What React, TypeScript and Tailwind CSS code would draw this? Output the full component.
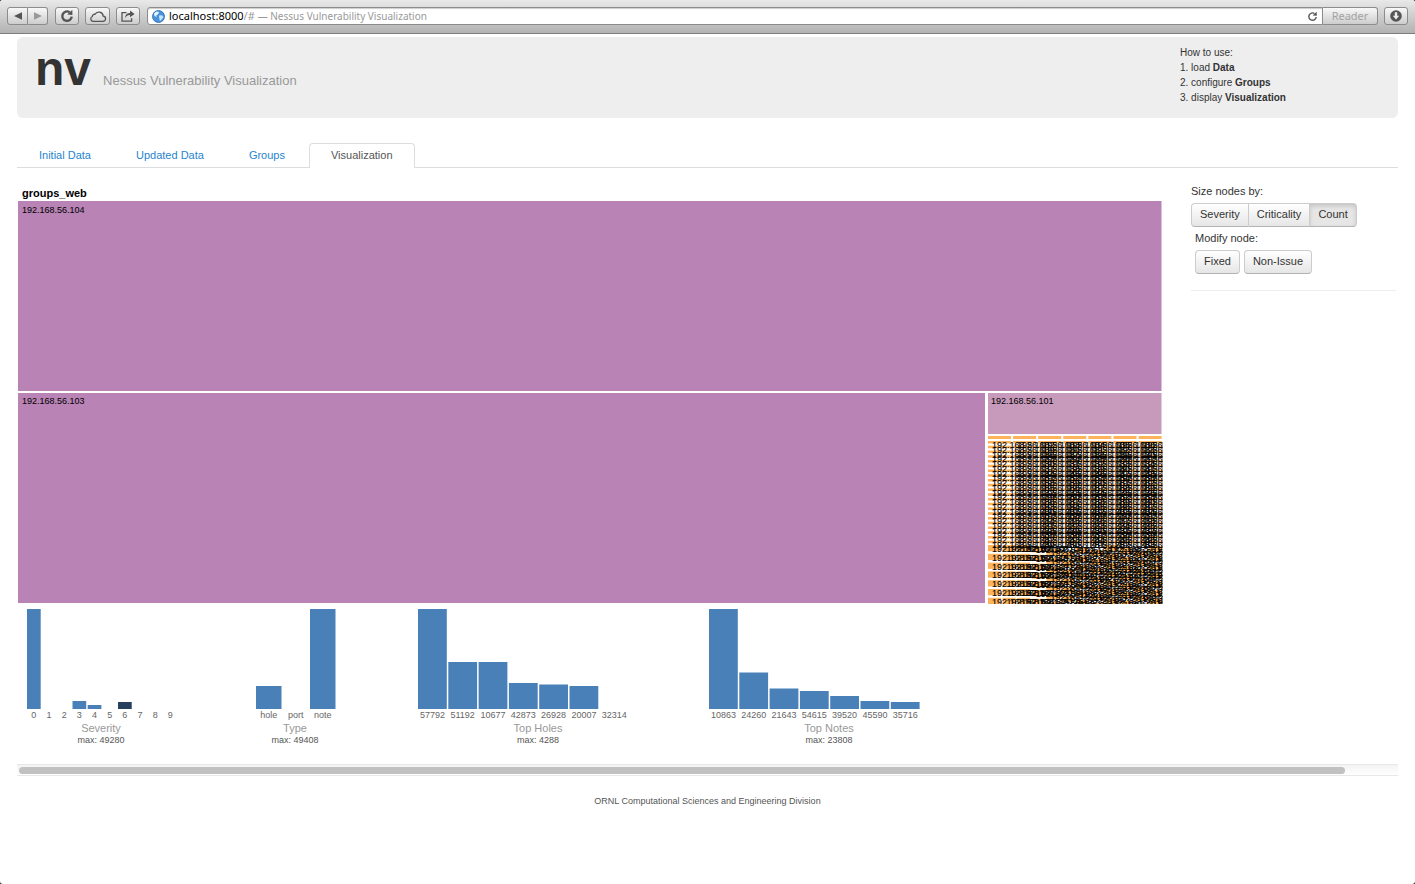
import React, { useState } from "react";

type Bar = { label: string; height: number; dark?: boolean };

type ChartProps = {
  title: string;
  max: string;
  bars: Bar[];
  width: number;
  pitch: number;
  barWidth: number;
  titleX: number;
};

const severity: Bar[] = [
  { label: "0", height: 100 },
  { label: "1", height: 0 },
  { label: "2", height: 0 },
  { label: "3", height: 8 },
  { label: "4", height: 4 },
  { label: "5", height: 0 },
  { label: "6", height: 7, dark: true },
  { label: "7", height: 0 },
  { label: "8", height: 0 },
  { label: "9", height: 0 },
];

const types: Bar[] = [
  { label: "hole", height: 23 },
  { label: "port", height: 0 },
  { label: "note", height: 100 },
];

const holes: Bar[] = [
  { label: "57792", height: 100 },
  { label: "51192", height: 47 },
  { label: "10677", height: 47 },
  { label: "42873", height: 26 },
  { label: "26928", height: 24.5 },
  { label: "20007", height: 23 },
  { label: "32314", height: 0 },
];

const notes: Bar[] = [
  { label: "10863", height: 100 },
  { label: "24260", height: 36.5 },
  { label: "21643", height: 20.5 },
  { label: "54615", height: 18 },
  { label: "39520", height: 13 },
  { label: "45590", height: 8 },
  { label: "35716", height: 7 },
];

function Chart({ title, max, bars, width, pitch, barWidth, titleX }: ChartProps) {
  return (
    <svg width={width} height={140} role="img" aria-label={title} className="shrink-0">
      {bars.map((b, i) => (
        <g key={b.label}>
          <rect
            x={10 + i * pitch}
            y={100 - b.height}
            width={barWidth}
            height={b.height}
            fill={b.dark ? "#25405e" : "#4a80b8"}
          />
          <text x={10 + i * pitch + barWidth / 2} y={109} textAnchor="middle" fontSize={9} fill="#666">
            {b.label}
          </text>
        </g>
      ))}
      <text x={titleX} y={123} textAnchor="middle" fontSize={11} fill="#999">
        {title}
      </text>
      <text x={titleX} y={134} textAnchor="middle" fontSize={9} fill="#555">
        {max}
      </text>
    </svg>
  );
}

type Cell = { x: number; y: number; w: number; h: number; label: string };

function smallCells(): Cell[] {
  const cells: Cell[] = [];
  for (let row = 0; row < 22; row++) {
    for (let col = 0; col < 7; col++) {
      cells.push({
        x: 971 + col * 25.1,
        y: 256 + row * 4.75,
        w: 23,
        h: 2.5,
        label: `192.168.56.${102 + row * 7 + col}`,
      });
    }
  }
  for (let row = 0; row < 7; row++) {
    for (let col = 0; col < 12; col++) {
      cells.push({
        x: 971 + col * 14.6,
        y: 360 + row * 8.8 + (col > 2 ? (col * 3) % 8 : 0),
        w: 13,
        h: 6.3,
        label: `192.168.57.${102 + row * 12 + col}`,
      });
    }
  }
  return cells;
}

const cells = smallCells();

function Treemap() {
  return (
    <svg viewBox="0 0 1146 420" className="block h-auto w-full" role="img" aria-label="groups_web treemap">
      <defs>
        <clipPath id="map-area">
          <rect x="971" y="255" width="174.500" height="164" />
        </clipPath>
      </defs>
      <text x="5" y="12" fontSize="11" fontWeight="bold" fill="#000">
        groups_web
      </text>
      <rect x="1" y="16" width="1143.5" height="190" fill="#b983b5" />
      <rect x="1" y="208" width="967" height="210" fill="#b983b5" />
      <rect x="971" y="208" width="173.5" height="41" fill="#c799ba" />
      <g fontSize="9" fill="#000">
        <text x="5" y="28">192.168.56.104</text>
        <text x="5" y="219">192.168.56.103</text>
        <text x="974" y="219">192.168.56.101</text>
      </g>
      <g fill="#fdb35b">
        {[0, 1, 2, 3, 4, 5, 6].map((i) => (
          <rect key={i} x={971 + i * 25.1} y="251" width="23" height="3" />
        ))}
      </g>
      <g clipPath="url(#map-area)">
        <g fill="#fdb35b">
          {cells.map((c) => (
            <rect key={c.label} x={c.x} y={c.y} width={c.w} height={c.h} />
          ))}
        </g>
        <g fontSize="9" fill="#000" stroke="#000" strokeWidth="0.12">
          {cells.map((c) => (
            <text key={c.label} x={c.x + 4} y={c.y + 7}>
              {c.label}
            </text>
          ))}
        </g>
      </g>
    </svg>
  );
}

const chromeButton =
  "flex h-[18px] items-center justify-center rounded-[3px] border border-[#8c8c8c] bg-linear-to-b from-[#f8f8f8] to-[#cdcdcd] text-[#555]";

function ReloadArrow({ size, weight }: { size: number; weight: number }) {
  return (
    <svg width={size} height={size} viewBox="0 0 14 14" fill="none" stroke="currentColor" strokeWidth={weight}>
      <path d="M9.6 3.2A4.7 4.7 0 1 0 11.7 7.6" />
      <path d="M7.2 5.6 12.4 6V.8Z" fill="currentColor" stroke="none" />
    </svg>
  );
}

function BrowserBar() {
  return (
    <header className="flex h-[34px] items-start gap-[6px] border-b border-[#7d7d7d] bg-linear-to-b from-[#e9e9e9] to-[#b2b2b2] px-[7px] pt-[7px] font-['Noto_Sans',sans-serif] text-[11px]">
      <div className="flex">
        <button aria-label="Back" className={`${chromeButton} w-[21px] rounded-r-none`}>
          <svg width="8" height="8" viewBox="0 0 8 8"><path d="M0 4 8 .3V7.7Z" fill="#555" /></svg>
        </button>
        <button aria-label="Forward" className={`${chromeButton} w-[20px] rounded-l-none border-l-0`}>
          <svg width="8" height="8" viewBox="0 0 8 8"><path d="M8 4 0 .3V7.7Z" fill="#999" /></svg>
        </button>
      </div>
      <button aria-label="Reload" className={`${chromeButton} ml-px w-[24px]`}>
        <ReloadArrow size={14} weight={2.4} />
      </button>
      <button aria-label="Cloud tabs" className={`${chromeButton} w-[25px]`}>
        <svg width="18" height="13" viewBox="0 0 18 13" fill="none" stroke="#555" strokeWidth="1.3" className="shrink-0">
          <path d="M4.3 11.3h9.4a2.6 2.6 0 0 0 .5-5.2A4.4 4.4 0 0 0 6 4.3a2.3 2.3 0 0 0-2.7 2.2A2.5 2.5 0 0 0 4.3 11.3Z" />
        </svg>
      </button>
      <button aria-label="Share" className={`${chromeButton} w-[24px]`}>
        <svg width="14" height="12" viewBox="0 0 14 12" fill="none" stroke="#555" strokeWidth="1.3" className="shrink-0">
          <path d="M5.5 2.7H1v8.4h9.6V8.2" />
          <path d="M4 8.2C4.2 4.7 6 3.2 9 3.1V.6L13.6 4 9 7.3V5C6.7 5 5.2 6 4 8.2Z" fill="#555" stroke="none" />
        </svg>
      </button>
      <div className="ml-px flex min-w-0 flex-1">
        <div className="flex h-[18px] min-w-0 flex-1 items-center rounded-l-[3px] border border-[#8c8c8c] bg-white px-1 shadow-[inset_0_1px_1px_#ccc]">
          <svg width="13" height="13" viewBox="0 0 13 13" className="mr-1 shrink-0">
            <circle cx="6.5" cy="6.5" r="6" fill="#4a92dc" stroke="#2867ae" strokeWidth=".8" />
            <path d="M2 3.5 4.5 1.4 7 2 6 4.2 4.3 5.2 4.6 7 2.5 6Z" fill="#e8f5ff" />
            <path d="M7 5.6 10 5.3 11.5 7.3 9.3 9.8 8 11.3 7.3 8.6Z" fill="#c5e5ff" />
          </svg>
          <input
            aria-label="Address"
            defaultValue="localhost:8000"
            className="[field-sizing:content] bg-transparent p-0 text-black outline-none"
          />
          <span className="truncate text-[#999]">
            /# <span className="text-[10px]">— Nessus Vulnerability Visualization</span>
          </span>
          <button aria-label="Reload page" className="mr-0 ml-auto text-[#555]">
            <ReloadArrow size={11} weight={1.8} />
          </button>
        </div>
        <button className={`${chromeButton} w-[55px] shrink-0 rounded-l-none border-l-0`}>
          <span className="text-[#a3a3a3]">Reader</span>
        </button>
      </div>
      <button aria-label="Downloads" className={`${chromeButton} w-[24px]`}>
        <svg width="12" height="12" viewBox="0 0 12 12" className="shrink-0">
          <circle cx="6" cy="6" r="5.8" fill="#555" />
          <path d="M4.8 2.3h2.4v3.5h2L6 9.5 2.8 5.8h2Z" fill="#eee" />
        </svg>
      </button>
    </header>
  );
}

const tabs = ["Initial Data", "Updated Data", "Groups", "Visualization"];

function Tabs() {
  const [active, setActive] = useState("Visualization");
  return (
    <nav className="mt-[25px] flex border-b border-[#ddd] pl-px text-[11px] leading-4">
      {tabs.map((t) => (
        <a
          key={t}
          href="#"
          onClick={() => setActive(t)}
          className={
            t === active
              ? "-mb-px rounded-t-[4px] border border-b-0 border-[#ddd] bg-white px-[21px] pt-[3px] pb-[5px] text-[#555]"
              : "mr-[3px] border border-b-0 border-transparent px-5 pt-[3px] pb-1 text-[#1f84d0]"
          }
        >
          {t}
        </a>
      ))}
    </nav>
  );
}

const button =
  "h-6 border border-[#ccc] border-b-[#b3b3b3] px-2 pb-[2px] text-[11px] leading-4 text-[#333]";
const raised = "bg-linear-to-b from-white to-[#e6e6e6]";

function Controls() {
  const [size, setSize] = useState("Count");
  const shape: Record<string, string> = {
    Severity: "rounded-l-[4px]",
    Criticality: "border-l-0",
    Count: "rounded-r-[4px] border-l-0",
  };
  return (
    <aside className="mr-[2px] pt-[15px] text-[11px] leading-4 text-[#333]">
      <p>Size nodes by:</p>
      <div className="mt-1 flex">
        {Object.keys(shape).map((s) => (
          <button
            key={s}
            onClick={() => setSize(s)}
            className={`${button} ${shape[s]} ${
              s === size ? "bg-[#e6e6e6] shadow-[inset_0_2px_4px_rgba(0,0,0,0.15)]" : raised
            }`}
          >
            {s}
          </button>
        ))}
      </div>
      <div className="ml-1">
        <p className="mt-[3px]">Modify node:</p>
        <div className="mt-1 flex gap-1">
          <button className={`${button} ${raised} rounded-[4px]`}>Fixed</button>
          <button className={`${button} ${raised} rounded-[4px]`}>Non-Issue</button>
        </div>
      </div>
      <hr className="mt-4 border-[#eee]" />
    </aside>
  );
}

export default function App() {
  return (
    <div className="bg-[#333]">
      <div className="min-h-screen overflow-hidden rounded-[3px] bg-white font-['Liberation_Sans',Arial,sans-serif]">
        <BrowserBar />
        <main className="mx-[17px]">
          <section className="mt-[3px] flex h-[81px] justify-between rounded-[6px] bg-[#eee] pl-[18px]">
            <h1 className="flex items-baseline gap-3 text-[48px] leading-[64px] font-bold text-[#333]">
              nv
              <small className="text-[13px] font-normal text-[#999]">Nessus Vulnerability Visualization</small>
            </h1>
            <div className="w-[218px] pt-2 text-[10px] leading-[15px] text-[#333]">
              <p>How to use:</p>
              <ol>
                <li>1. load <b>Data</b></li>
                <li>2. configure <b>Groups</b></li>
                <li>3. display <b>Visualization</b></li>
              </ol>
            </div>
          </section>
          <Tabs />
          <div className="grid grid-cols-[minmax(0,1fr)_207px] gap-7">
            <div className="pt-[17px]">
              <Treemap />
            </div>
            <Controls />
          </div>
          <div className="mt-1 flex">
            <Chart title="Severity" max="max: 49280" bars={severity} width={229} pitch={15.17} barWidth={13.7} titleX={84} />
            <Chart title="Type" max="max: 49408" bars={types} width={162} pitch={27} barWidth={25.5} titleX={49} />
            <Chart title="Top Holes" max="max: 4288" bars={holes} width={291} pitch={30.3} barWidth={28.8} titleX={130} />
            <Chart title="Top Notes" max="max: 23808" bars={notes} width={231} pitch={30.3} barWidth={28.8} titleX={130} />
          </div>
          <div className="mt-[15px] h-3 border-y border-[#e8e8e8] bg-linear-to-b from-[#f3f3f3] to-white px-[2px] pt-[2px]">
            <div className="h-[7px] w-[96.3%] rounded-full bg-[#c1c1c1]" />
          </div>
          <footer className="pt-[19px] text-center text-[9px] leading-3 text-[#555]">
            ORNL Computational Sciences and Engineering Division
          </footer>
        </main>
      </div>
    </div>
  );
}
